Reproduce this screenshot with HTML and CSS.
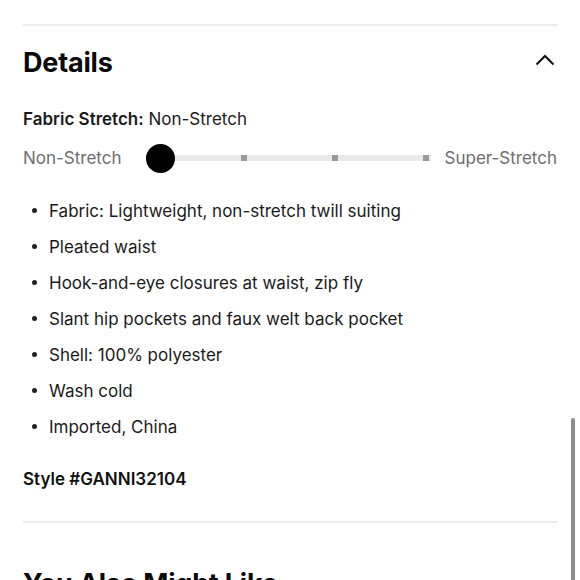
FILE: index.html
```html
<!DOCTYPE html>
<html>
<head>
<meta charset="utf-8">
<link rel="stylesheet" href="styles.css">
</head>
<body>
<div class="page">
  <hr class="rule top-rule">
  <section class="details">
    <div class="details-head">
      <h2 class="title">Details</h2>
      <svg class="chevron" width="20" height="12" viewBox="0 0 20 12"><path d="M1.5 10.5 L10 2 L18.5 10.5" fill="none" stroke="#111" stroke-width="2"/></svg>
    </div>
    <p class="stretch-label"><b>Fabric Stretch:</b> Non-Stretch</p>
    <div class="slider-row">
      <span class="slider-text">Non-Stretch</span>
      <div class="slider">
        <span class="knob"></span>
        <div class="track">
          <span class="tick"></span>
          <span class="tick"></span>
          <span class="tick"></span>
        </div>
      </div>
      <span class="slider-text">Super-Stretch</span>
    </div>
    <ul class="bullets">
      <li>Fabric: Lightweight, non-stretch twill suiting</li>
      <li>Pleated waist</li>
      <li>Hook-and-eye closures at waist, zip fly</li>
      <li>Slant hip pockets and faux welt back pocket</li>
      <li>Shell: 100% polyester</li>
      <li>Wash cold</li>
      <li>Imported, China</li>
    </ul>
    <p class="style-no">Style #GANNI32104</p>
  </section>
  <hr class="rule">
  <h2 class="title next">You Also Might Like</h2>
</div>
<div class="scrollbar"></div>
</body>
</html>
```

FILE: styles.css
```css
html, body {
  margin: 0;
  padding: 0;
  background: #fff;
  overflow: hidden;
  height: 580px;
}
body {
  font-family: "Inter", "Liberation Sans", sans-serif;
  color: #111;
}
.page {
  padding: 24px 23px 0 23px;
}
.rule {
  border: 0;
  border-top: 2px solid #ececec;
  margin: 0;
}
.details-head {
  display: flex;
  align-items: center;
  justify-content: space-between;
  margin-top: 20px;
  height: 32px;
}
.title {
  margin: 0;
  font-size: 27px;
  font-weight: 700;
  letter-spacing: -0.2px;
  color: #0a0a0a;
}
.chevron {
  margin-right: 2px;
  margin-top: -4px;
}
.stretch-label {
  margin: 31px 0 0 0;
  font-size: 17px;
  line-height: 20px;
  color: #1a1a1a;
}
.stretch-label b {
  font-weight: 600;
}
.slider-row {
  display: flex;
  align-items: center;
  margin-top: 14px;
  height: 30px;
}
.slider-text {
  font-size: 17px;
  color: #6e6e6e;
}
.slider {
  flex: 1;
  display: flex;
  align-items: center;
  margin: 0 14px 0 24px;
}
.knob {
  width: 29px;
  height: 29px;
  border-radius: 50%;
  background: #000;
  flex: none;
}
.track {
  flex: 1;
  height: 6px;
  background: #e9e9e9;
  display: flex;
  justify-content: flex-end;
  align-items: center;
  gap: 85px;
  padding-right: 2px;
}
.tick {
  width: 6px;
  height: 6px;
  background: #999;
}
.bullets {
  list-style: none;
  margin: 20px 0 0 0;
  padding: 0;
}
.bullets li {
  position: relative;
  padding-left: 26px;
  font-size: 17px;
  line-height: 36px;
  color: #1a1a1a;
}
.bullets li::before {
  content: "";
  position: absolute;
  left: 9px;
  top: 15px;
  width: 5px;
  height: 5px;
  border-radius: 50%;
  background: #222;
}
.style-no {
  margin: 24px 0 32px 0;
  font-size: 17px;
  font-weight: 600;
  line-height: 20px;
}
.next {
  margin-top: 44px;
}
.scrollbar {
  position: absolute;
  right: 5px;
  top: 418px;
  width: 4px;
  height: 170px;
  border-radius: 2px;
  background: #8c8c8c;
}
```
